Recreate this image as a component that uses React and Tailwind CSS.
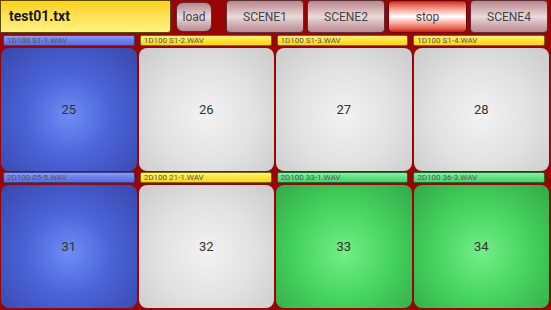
import React from 'react';

const labelStyles = {
  blue: 'bg-gradient-to-b from-[#8a9cf5] via-[#6b80ea] to-[#5a6fdc] border-[#3a3f8a]',
  yellow: 'bg-gradient-to-b from-[#fff27a] via-[#ffe536] to-[#f5d41c] border-[#7a6a10]',
  green: 'bg-gradient-to-b from-[#8ef0a4] via-[#5fe07e] to-[#4fd06e] border-[#1f6a30]',
};

const padStyles = {
  blue: 'bg-[radial-gradient(ellipse_at_50%_55%,#6f8df5_0%,#4a63d8_45%,#3847a8_100%)]',
  gray: 'bg-[radial-gradient(ellipse_at_50%_55%,#f2f2f2_0%,#e2e2e2_50%,#cacaca_100%)]',
  green: 'bg-[radial-gradient(ellipse_at_50%_55%,#74ee88_0%,#45d35e_50%,#33a849_100%)]',
};

const rows = [
  [
    { file: '1D100 S1-1.WAV', label: 'blue', pad: 'blue', num: 25 },
    { file: '1D100 S1-2.WAV', label: 'yellow', pad: 'gray', num: 26 },
    { file: '1D100 S1-3.WAV', label: 'yellow', pad: 'gray', num: 27 },
    { file: '1D100 S1-4.WAV', label: 'yellow', pad: 'gray', num: 28 },
  ],
  [
    { file: '2D100 05-5.WAV', label: 'blue', pad: 'blue', num: 31 },
    { file: '2D100 21-1.WAV', label: 'yellow', pad: 'gray', num: 32 },
    { file: '2D100 33-1.WAV', label: 'green', pad: 'green', num: 33 },
    { file: '2D100 36-3.WAV', label: 'green', pad: 'green', num: 34 },
  ],
];

const scenes = ['SCENE1', 'SCENE2', 'stop', 'SCENE4'];

const App = () => {
  return (
    <div className="w-[551px] h-[310px] overflow-hidden bg-[#990404] font-['Roboto',sans-serif] flex flex-col">
      {/* Top bar */}
      <div className="flex h-[34px] items-stretch">
        <div className="w-[171px] h-[33px] rounded-br-[3px] border border-[#5a4a00] bg-gradient-to-b from-[#ffd100] to-[#fff27e] flex items-center pl-[8px] text-[14px] font-bold text-[#1a1a1a]">
          test01.txt
        </div>
        <div className="ml-[5px] w-[36px] h-[30px] mt-[2px] rounded-[7px] border border-[#5a3036] bg-gradient-to-b from-[#b9868c] via-[#ead9db] to-[#b98a90] flex items-center justify-center text-[12px] text-[#444]">
          load
        </div>
        <div className="ml-[14px] flex gap-[3px]">
          {scenes.map((s) => (
            <div
              key={s}
              className={
                s === 'stop'
                  ? 'w-[79px] h-[33px] rounded-[4px] border border-[#6a0000] bg-gradient-to-b from-[#d40c0c] via-[#ffffff] to-[#d40c0c] flex items-center justify-center text-[12px] text-[#444]'
                  : 'w-[78px] h-[33px] rounded-[4px] border border-[#5a3036] bg-gradient-to-b from-[#b9868c] via-[#ead9db] to-[#b98a90] flex items-center justify-center text-[12px] text-[#444]'
              }
            >
              {s}
            </div>
          ))}
        </div>
      </div>

      {/* Pad grid */}
      {rows.map((row, ri) => (
        <div key={ri} className="flex flex-col">
          <div className="grid grid-cols-4 gap-[5px] pl-[3px] pr-[6px] mt-[1px] h-[12px]">
            {row.map((c) => (
              <div
                key={c.file}
                className={`h-[11px] rounded-[2px] border ${labelStyles[c.label]} text-[8px] leading-[9px] pl-[3px] text-[#555] whitespace-nowrap overflow-hidden`}
              >
                {c.file}
              </div>
            ))}
          </div>
          <div className="grid grid-cols-4 gap-[2px] pl-[1px] pr-[2px] mt-[1px]">
            {row.map((c) => (
              <div
                key={c.num}
                className={`h-[123px] rounded-[8px] ${padStyles[c.pad]} flex items-center justify-center text-[13px] text-[#333]`}
              >
                {c.num}
              </div>
            ))}
          </div>
        </div>
      ))}
    </div>
  );
};

export default App;
